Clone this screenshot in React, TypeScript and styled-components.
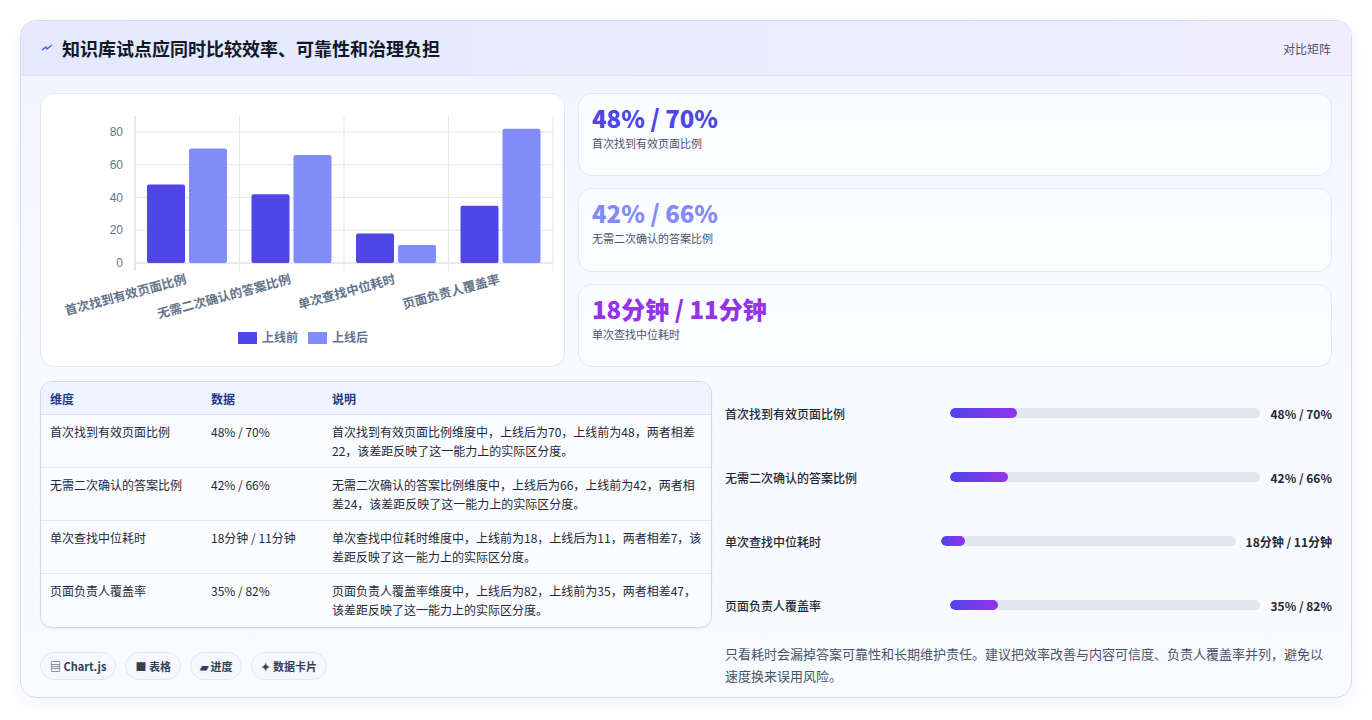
import React from "react";
import styled, { createGlobalStyle } from "styled-components";

const G = createGlobalStyle`
  html,body{margin:0;padding:0;background:#fff;}
  body{font-family:"Noto Sans CJK SC","Noto Sans",sans-serif;color:#1e293b;}
  *{box-sizing:border-box;}
`;
const Page = styled.div`padding:20px 20px 22px 20px;height:720px;`;
const Shell = styled.div`
  border:1px solid #d6dcf5;border-radius:16px;overflow:hidden;height:678px;
  background:linear-gradient(180deg,#f1f4ff 0%,#f7f9ff 40%,#fafbff 100%);
  box-shadow:0 6px 18px rgba(99,102,241,0.08);
`;
const Header = styled.div`
  height:55px;display:flex;align-items:center;justify-content:space-between;padding:0 20px 0 20px;
  background:linear-gradient(90deg,#e4e9fd,#f0eefe);border-bottom:1px solid #dfe5f6;
`;
const Title = styled.h1`margin:0;font-size:18px;font-weight:700;color:#111827;display:flex;align-items:center;gap:9px;`;
const HeadLink = styled.span`font-size:12px;color:#475569;`;
const Body = styled.div`padding:17px 19px 0 19px;display:flex;flex-direction:column;`;
const TopGrid = styled.div`display:grid;grid-template-columns:525px 1fr;gap:13px;height:274px;`;
const Card = styled.div`background:#fff;border:1px solid #e2e8f6;border-radius:14px;`;
const Cards = styled.div`display:grid;grid-template-rows:repeat(3,1fr);gap:12px;`;
const Stat = styled(Card)`padding:8px 13px;background:linear-gradient(180deg,#fbfcff,#fcfdff);`;
const StatNum = styled.div<{ c: string }>`font-size:24px;font-weight:800;color:${p => p.c};line-height:32px;`;
const StatLabel = styled.div`font-size:11px;color:#475569;margin-top:1px;`;
const BottomGrid = styled.div`display:grid;grid-template-columns:672px 1fr;gap:13px;margin-top:14px;`;
const Left = styled.div`display:flex;flex-direction:column;`;
const Table = styled.table`
  width:100%;border-collapse:separate;border-spacing:0;border:1px solid #cfd9ea;border-radius:12px;overflow:hidden;
  font-size:12px;background:#fafcff;box-shadow:0 1px 2px rgba(0,0,0,0.06);
`;
const Th = styled.th`text-align:left;font-weight:700;color:#1e3a8a;background:#eef4ff;height:33px;padding:0 9px;border-bottom:1px solid #d3dcec;`;
const Td = styled.td`vertical-align:top;padding:7px 9px 7px 9px;height:53px;line-height:19px;color:#1f2937;border-bottom:1px solid #e2e8f2;
  tr:last-child &{border-bottom:none;}`;
const Chips = styled.div`display:flex;gap:9px;margin-top:24px;`;
const Chip = styled.span`font-size:11px;font-weight:600;color:#334155;border:1px solid #e1e7f2;background:#f6f8fd;border-radius:14px;padding:5px 9px;`;
const Right = styled.div`display:flex;flex-direction:column;`;
const PRow = styled.div`display:flex;align-items:center;height:64px;font-size:12px;font-weight:500;`;
const PLabel = styled.div`flex:0 0 auto;color:#1f2937;`;
const Track = styled.div<{ ml: number }>`flex:1;height:10px;border-radius:5px;background:#e2e8f0;margin:0 10px 0 ${p => p.ml}px;overflow:hidden;`;
const Fill = styled.div`height:100%;border-radius:5px;background:linear-gradient(90deg,#4f46e5,#9333ea);`;
const PVal = styled.div`font-weight:700;color:#1f2937;font-size:12px;`;
const Note = styled.p`margin:6px 0 0 0;font-size:13px;line-height:22px;color:#475569;`;

const rows = [
  { k: "首次找到有效页面比例", v: "48% / 70%", d: "首次找到有效页面比例维度中，上线后为70，上线前为48，两者相差22，该差距反映了这一能力上的实际区分度。", b: 48, a: 70, f: 21.6 },
  { k: "无需二次确认的答案比例", v: "42% / 66%", d: "无需二次确认的答案比例维度中，上线后为66，上线前为42，两者相差24，该差距反映了这一能力上的实际区分度。", b: 42, a: 66, f: 18.7 },
  { k: "单次查找中位耗时", v: "18分钟 / 11分钟", d: "单次查找中位耗时维度中，上线前为18，上线后为11，两者相差7，该差距反映了这一能力上的实际区分度。", b: 18, a: 11, f: 8.3 },
  { k: "页面负责人覆盖率", v: "35% / 82%", d: "页面负责人覆盖率维度中，上线后为82，上线前为35，两者相差47，该差距反映了这一能力上的实际区分度。", b: 35, a: 82, f: 15.5 },
];
const margins = [105, 93, 120, 129];

function Chart() {
  const x0 = 94, x1 = 512, y0 = 169, s = 1.6375;
  const cw = (x1 - x0) / 4;
  return (
    <svg width="523" height="272" viewBox="0 0 523 272" style={{ display: "block" }}>
      {[0, 20, 40, 60, 80].map(t => (
        <g key={t}>
          <line x1={x0} x2={x1} y1={y0 - t * s} y2={y0 - t * s} stroke={t === 0 ? "#cbd5e1" : "#e5e7eb"} />
          <text x={x0 - 12} y={y0 - t * s + 4} textAnchor="end" fontSize="12" fill="#64748b" fontFamily="Liberation Sans, sans-serif">{t}</text>
        </g>
      ))}
      {[0, 1, 2, 3, 4].map(i => (
        <line key={i} x1={x0 + i * cw} x2={x0 + i * cw} y1={22} y2={y0 + 8} stroke={i === 0 ? "#cbd5e1" : "#e5e7eb"} />
      ))}
      {rows.map((r, i) => {
        const cx = x0 + i * cw;
        return (
          <g key={i}>
            <rect x={cx + 12} y={y0 - r.b * s} width={38} height={r.b * s} rx="2" fill="#4f46e5" />
            <rect x={cx + 54} y={y0 - r.a * s} width={38} height={r.a * s} rx="2" fill="#818cf8" />
            <text x={cx + 52} y={y0 + 20} textAnchor="end" fontSize="12.5" fontWeight="600" fill="#64748b"
              transform={`rotate(-15 ${cx + 52} ${y0 + 20})`}>{r.k}</text>
          </g>
        );
      })}
      <rect x="197" y="238" width="19" height="12" fill="#4f46e5" />
      <text x="221" y="248" fontSize="12" fill="#64748b" fontWeight="600">上线前</text>
      <rect x="267" y="238" width="19" height="12" fill="#818cf8" />
      <text x="291" y="248" fontSize="12" fill="#64748b" fontWeight="600">上线后</text>
    </svg>
  );
}

export default function App() {
  return (
    <Page>
      <G />
      <Shell>
        <Header>
          <Title>
            <svg width="12" height="10" viewBox="0 0 12 10"><path d="M1 7 L5 4 L6 6 L11 2" stroke="#3b63e0" strokeWidth="1.4" fill="none" /></svg>
            知识库试点应同时比较效率、可靠性和治理负担
          </Title>
          <HeadLink>对比矩阵</HeadLink>
        </Header>
        <Body>
          <TopGrid>
            <Card><Chart /></Card>
            <Cards>
              <Stat><StatNum c="#4f46e5">48% / 70%</StatNum><StatLabel>首次找到有效页面比例</StatLabel></Stat>
              <Stat><StatNum c="#818cf8">42% / 66%</StatNum><StatLabel>无需二次确认的答案比例</StatLabel></Stat>
              <Stat><StatNum c="#9333ea">18分钟 / 11分钟</StatNum><StatLabel>单次查找中位耗时</StatLabel></Stat>
            </Cards>
          </TopGrid>
          <BottomGrid>
            <Left>
              <Table>
                <colgroup><col style={{ width: 161 }} /><col style={{ width: 121 }} /><col /></colgroup>
                <thead><tr><Th>维度</Th><Th>数据</Th><Th>说明</Th></tr></thead>
                <tbody>
                  {rows.map(r => (
                    <tr key={r.k}><Td>{r.k}</Td><Td>{r.v}</Td><Td>{r.d}</Td></tr>
                  ))}
                </tbody>
              </Table>
              <Chips>
                <Chip>▤ Chart.js</Chip><Chip>■ 表格</Chip><Chip>▰ 进度</Chip><Chip>✦ 数据卡片</Chip>
              </Chips>
            </Left>
            <Right>
              {rows.map((r, i) => (
                <PRow key={r.k}>
                  <PLabel>{r.k}</PLabel>
                  <Track ml={margins[i]}><Fill style={{ width: `${r.f}%` }} /></Track>
                  <PVal>{r.v}</PVal>
                </PRow>
              ))}
              <Note>只看耗时会漏掉答案可靠性和长期维护责任。建议把效率改善与内容可信度、负责人覆盖率并列，避免以速度换来误用风险。</Note>
            </Right>
          </BottomGrid>
        </Body>
      </Shell>
    </Page>
  );
}
